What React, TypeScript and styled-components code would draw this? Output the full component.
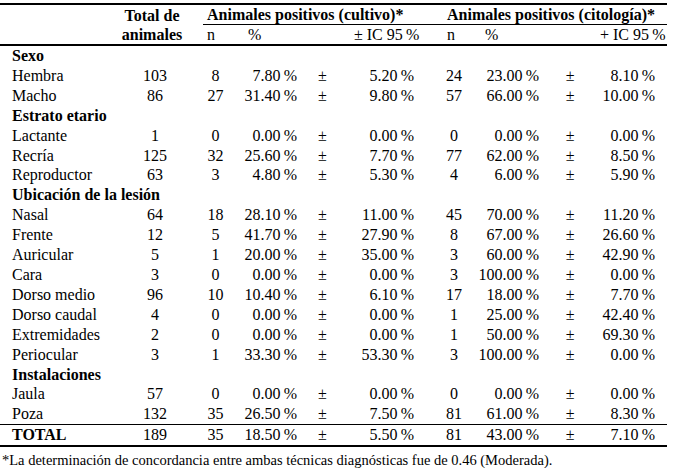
import React from "react"
import styled, { createGlobalStyle } from "styled-components"

type Align = "left" | "center" | "right"

type Stat = [number, string, string]

type DataRow = {
  label: string
  total: number
  cultivo: Stat
  citologia: Stat
}

type Section = {
  title: string
  rows: DataRow[]
}

// column widths and how the body values sit in each one
const COLUMNS: { w: number; align: Align; padL?: number; padR?: number }[] = [
  { w: 118, align: "left", padL: 12 },
  { w: 85, align: "center", padR: 11 },
  { w: 25, align: "center" },
  { w: 72, align: "right", padR: 3 },
  { w: 45, align: "center" },
  { w: 95, align: "right", padR: 26 },
  { w: 28, align: "center" },
  { w: 77, align: "right", padR: 6 },
  { w: 50, align: "center" },
  { w: 72, align: "right", padR: 12 },
]

const pct = (v: string) => `${v}\u2009%`

const SECTIONS: Section[] = [
  {
    title: "Sexo",
    rows: [
      { label: "Hembra", total: 103, cultivo: [8, "7.80", "5.20"], citologia: [24, "23.00", "8.10"] },
      { label: "Macho", total: 86, cultivo: [27, "31.40", "9.80"], citologia: [57, "66.00", "10.00"] },
    ],
  },
  {
    title: "Estrato etario",
    rows: [
      { label: "Lactante", total: 1, cultivo: [0, "0.00", "0.00"], citologia: [0, "0.00", "0.00"] },
      { label: "Recría", total: 125, cultivo: [32, "25.60", "7.70"], citologia: [77, "62.00", "8.50"] },
      { label: "Reproductor", total: 63, cultivo: [3, "4.80", "5.30"], citologia: [4, "6.00", "5.90"] },
    ],
  },
  {
    title: "Ubicación de la lesión",
    rows: [
      { label: "Nasal", total: 64, cultivo: [18, "28.10", "11.00"], citologia: [45, "70.00", "11.20"] },
      { label: "Frente", total: 12, cultivo: [5, "41.70", "27.90"], citologia: [8, "67.00", "26.60"] },
      { label: "Auricular", total: 5, cultivo: [1, "20.00", "35.00"], citologia: [3, "60.00", "42.90"] },
      { label: "Cara", total: 3, cultivo: [0, "0.00", "0.00"], citologia: [3, "100.00", "0.00"] },
      { label: "Dorso medio", total: 96, cultivo: [10, "10.40", "6.10"], citologia: [17, "18.00", "7.70"] },
      { label: "Dorso caudal", total: 4, cultivo: [0, "0.00", "0.00"], citologia: [1, "25.00", "42.40"] },
      { label: "Extremidades", total: 2, cultivo: [0, "0.00", "0.00"], citologia: [1, "50.00", "69.30"] },
      { label: "Periocular", total: 3, cultivo: [1, "33.30", "53.30"], citologia: [3, "100.00", "0.00"] },
    ],
  },
  {
    title: "Instalaciones",
    rows: [
      { label: "Jaula", total: 57, cultivo: [0, "0.00", "0.00"], citologia: [0, "0.00", "0.00"] },
      { label: "Poza", total: 132, cultivo: [35, "26.50", "7.50"], citologia: [81, "61.00", "8.30"] },
    ],
  },
]

const TOTAL: DataRow = {
  label: "TOTAL",
  total: 189,
  cultivo: [35, "18.50", "5.50"],
  citologia: [81, "43.00", "7.10"],
}

const cellsOf = (row: DataRow): React.ReactNode[] => [
  row.label,
  row.total,
  row.cultivo[0],
  pct(row.cultivo[1]),
  "±",
  pct(row.cultivo[2]),
  row.citologia[0],
  pct(row.citologia[1]),
  "±",
  pct(row.citologia[2]),
]

export default function App() {
  return (
    <>
      <GlobalStyle />
      <Page>
        <Table>
          <colgroup>
            {COLUMNS.map((c, i) => (
              <Col key={i} $w={c.w} />
            ))}
          </colgroup>
          <thead>
            <tr>
              <HeadCell rowSpan={2} $rule="bottom" />
              <HeadCell rowSpan={2} $rule="bottom" $bold $align="center" $padR={17}>
                Total de
                <br />
                animales
              </HeadCell>
              <HeadCell colSpan={4} $rule="mid" $bold $padL={4}>
                Animales positivos (cultivo)*
              </HeadCell>
              <HeadCell colSpan={4} $rule="mid" $bold $padL={7}>
                Animales positivos (citología)*
              </HeadCell>
            </tr>
            <tr>
              <HeadCell $rule="bottom" $padL={4}>n</HeadCell>
              <HeadCell $rule="bottom" $padL={20}>%</HeadCell>
              <HeadCell $rule="bottom" />
              <HeadCell $rule="bottom" $padL={9}>± IC 95{"\u2009"}%</HeadCell>
              <HeadCell $rule="bottom" $padL={7}>n</HeadCell>
              <HeadCell $rule="bottom" $padL={17}>%</HeadCell>
              <HeadCell $rule="bottom" />
              <HeadCell $rule="bottom" $padL={5}>+ IC 95{"\u2009"}%</HeadCell>
            </tr>
          </thead>
          <tbody>
            {SECTIONS.map((section) => (
              <React.Fragment key={section.title}>
                <tr>
                  <SectionCell colSpan={COLUMNS.length}>{section.title}</SectionCell>
                </tr>
                {section.rows.map((row) => (
                  <tr key={row.label}>
                    {cellsOf(row).map((v, i) => (
                      <Cell key={i} $align={COLUMNS[i].align} $padL={COLUMNS[i].padL} $padR={COLUMNS[i].padR}>
                        {v}
                      </Cell>
                    ))}
                  </tr>
                ))}
              </React.Fragment>
            ))}
            <tr>
              {cellsOf(TOTAL).map((v, i) => (
                <TotalCell
                  key={i}
                  $align={COLUMNS[i].align}
                  $padL={COLUMNS[i].padL}
                  $padR={COLUMNS[i].padR}
                  $bold={i === 0}
                >
                  {v}
                </TotalCell>
              ))}
            </tr>
          </tbody>
        </Table>
        <Footnote>
          *La determinación de concordancia entre ambas técnicas diagnósticas fue de 0.46 (Moderada).
        </Footnote>
      </Page>
    </>
  )
}

const GlobalStyle = createGlobalStyle`
  body {
    margin: 0;
    background: #fff;
  }
`

const Page = styled.div`
  padding-top: 3px;
  font-family: "Liberation Serif", "Times New Roman", serif;
  color: #000;
`

const Table = styled.table`
  width: 667px;
  table-layout: fixed;
  border-collapse: separate;
  border-spacing: 0;
  border-top: 2px solid #000;
  font-size: 16px;
`

const Col = styled.col<{ $w: number }>`
  width: ${(p) => p.$w}px;
`

const HeadCell = styled.th<{
  $rule?: "mid" | "bottom"
  $bold?: boolean
  $align?: Align
  $padL?: number
  $padR?: number
}>`
  height: 19px;
  padding: 0 ${(p) => p.$padR ?? 0}px 0 ${(p) => p.$padL ?? 0}px;
  line-height: 19px;
  font-weight: ${(p) => (p.$bold ? 700 : 400)};
  text-align: ${(p) => p.$align ?? "left"};
  vertical-align: middle;
  white-space: nowrap;
  border-bottom: ${(p) => (p.$rule === "bottom" ? "2px" : p.$rule === "mid" ? "1px" : "0")} solid #000;
`

const Cell = styled.td<{ $align: Align; $padL?: number; $padR?: number }>`
  height: 19.9px;
  padding: 0 ${(p) => p.$padR ?? 0}px 0 ${(p) => p.$padL ?? 0}px;
  line-height: 19.9px;
  text-align: ${(p) => p.$align};
  white-space: nowrap;
`

const SectionCell = styled.td`
  height: 19.9px;
  padding: 0 0 0 12px;
  line-height: 19.9px;
  font-weight: 700;
  white-space: nowrap;
`

const TotalCell = styled(Cell)<{ $bold?: boolean }>`
  font-weight: ${(p) => (p.$bold ? 700 : 400)};
  border-top: 1px solid #000;
  border-bottom: 2px solid #000;
`

const Footnote = styled.p`
  margin: 5px 0 0;
  padding-left: 2px;
  font-size: 14.5px;
  line-height: 16px;
`
